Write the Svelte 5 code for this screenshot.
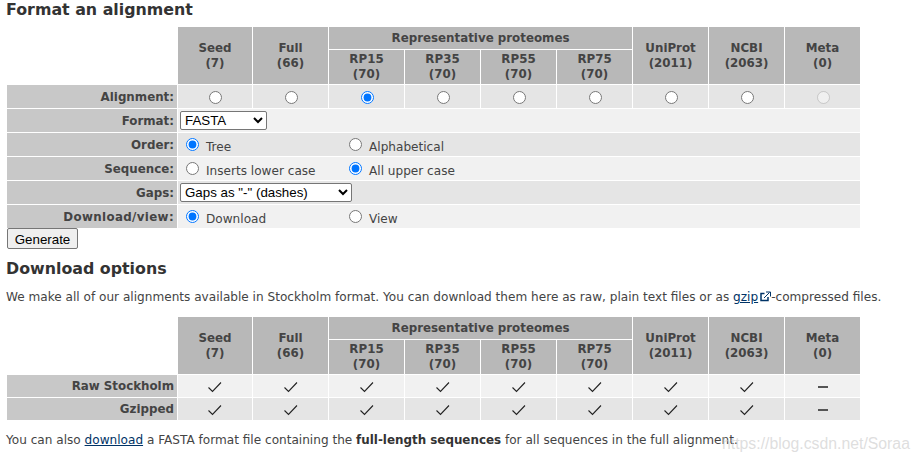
<script>
	const heads = [
		['Seed', 7],
		['Full', 66],
	]
	const rps = ['RP15', 'RP35', 'RP55', 'RP75']
	const tails = [
		['UniProt', 2011],
		['NCBI', 2063],
		['Meta', 0],
	]
	const cols = ['seed', 'full', 'rp15', 'rp35', 'rp55', 'rp75', 'uniprot', 'ncbi', 'meta']

	let alignment = $state('rp15')
	let order = $state('tree')
	let seq = $state('upper')
	let mode = $state('download')
</script>

{#snippet head()}
	<tr>
		<td class="blank" rowspan="2"></td>
		{#each heads as [name, n]}
			<th rowspan="2">{name}<br />({n})</th>
		{/each}
		<th class="group" colspan="4">Representative proteomes</th>
		{#each tails as [name, n]}
			<th rowspan="2">{name}<br />({n})</th>
		{/each}
	</tr>
	<tr>
		{#each rps as rp}
			<th>{rp}<br />(70)</th>
		{/each}
	</tr>
{/snippet}

{#snippet tick()}
	<svg class="tick" width="16" height="12" viewBox="0 0 16 12">
		<path d="M1.5 6.5 L5.5 10.5 L14 1.5" fill="none" stroke="#222" stroke-width="1.1" />
	</svg>
{/snippet}

{#snippet choice(value, text, group, set)}
	<label>
		<input type="radio" {value} checked={group === value} onchange={() => set(value)} />
		<span>{text}</span>
	</label>
{/snippet}

<main>
	<h2 class="first">Format an alignment</h2>
	<table class="form">
		<colgroup>
			<col class="label-col" />
			{#each cols as c}
				<col class="c-{c}" />
			{/each}
		</colgroup>
		<thead>{@render head()}</thead>
		<tbody>
			<tr class="even">
				<th class="label">Alignment:</th>
				{#each cols as c}
					<td class="mid">
						<input type="radio" name="alignment" value={c} bind:group={alignment} disabled={c === 'meta'} />
					</td>
				{/each}
			</tr>
			<tr class="odd">
				<th class="label">Format:</th>
				<td class="ctl" colspan="9">
					<select class="format">
						<option>FASTA</option>
						<option>Stockholm</option>
						<option>SELEX</option>
					</select>
				</td>
			</tr>
			<tr class="even">
				<th class="label">Order:</th>
				<td colspan="9">
					<div class="opts">
						{@render choice('tree', 'Tree', order, (v) => (order = v))}
						{@render choice('alpha', 'Alphabetical', order, (v) => (order = v))}
					</div>
				</td>
			</tr>
			<tr class="odd">
				<th class="label">Sequence:</th>
				<td colspan="9">
					<div class="opts">
						{@render choice('lower', 'Inserts lower case', seq, (v) => (seq = v))}
						{@render choice('upper', 'All upper case', seq, (v) => (seq = v))}
					</div>
				</td>
			</tr>
			<tr class="even">
				<th class="label">Gaps:</th>
				<td class="ctl" colspan="9">
					<select class="gaps">
						<option>Gaps as "-" (dashes)</option>
						<option>Gaps as "." (dots)</option>
						<option>No gaps (unaligned)</option>
					</select>
				</td>
			</tr>
			<tr class="odd">
				<th class="label wide">Download/view:</th>
				<td colspan="9">
					<div class="opts">
						{@render choice('download', 'Download', mode, (v) => (mode = v))}
						{@render choice('view', 'View', mode, (v) => (mode = v))}
					</div>
				</td>
			</tr>
		</tbody>
	</table>
	<button class="generate">Generate</button>

	<h2>Download options</h2>
	<p class="intro">
		We make all of our alignments available in Stockholm format. You can download them here as raw, plain text files or as
		<a href="#gzip">gzip</a><svg class="ext" width="11" height="11" viewBox="0 0 11 11">
			<path d="M4.5 2.5h-3.5v7h7v-3.5" fill="none" stroke="#036" stroke-width="1.5" />
			<path d="M4 7 L9.5 1.5 M6 1h4.5v4.5" fill="none" stroke="#036" stroke-width="1" />
		</svg>-compressed files.
	</p>

	<table class="form dl">
		<colgroup>
			<col class="label-col" />
			{#each cols as c}
				<col class="c-{c}" />
			{/each}
		</colgroup>
		<thead>{@render head()}</thead>
		<tbody>
			<tr class="odd">
				<th class="label">Raw Stockholm</th>
				{#each cols as c}
					<td class="mid">
						{#if c === 'meta'}<span class="dash"></span>{:else}{@render tick()}{/if}
					</td>
				{/each}
			</tr>
			<tr class="even">
				<th class="label">Gzipped</th>
				{#each cols as c}
					<td class="mid">
						{#if c === 'meta'}<span class="dash"></span>{:else}{@render tick()}{/if}
					</td>
				{/each}
			</tr>
		</tbody>
	</table>

	<p class="outro">
		You can also <a href="#download">download</a> a FASTA format file containing the
		<strong>full-length sequences</strong> for all sequences in the full alignment.
	</p>

	<div class="watermark">https://blog.csdn.net/Soraa</div>
</main>

<style>
	:global(body) {
		background: #fff;
	}

	main {
		position: relative;
		height: 462px;
		overflow: hidden;
		padding-left: 6px;
		box-sizing: border-box;
		font-family: 'DejaVu Sans', Verdana, sans-serif;
		font-size: 12.1px;
		color: #444;
	}

	h2 {
		margin: 0;
		font-size: 15.85px;
		line-height: 20px;
		font-weight: bold;
		color: #333;
		padding-top: 10px;
		padding-bottom: 11px;
	}

	h2.first {
		padding-top: 1px;
		padding-bottom: 7px;
		margin-top: -1px;
	}

	.form {
		border-collapse: separate;
		border-spacing: 1px;
		table-layout: fixed;
		width: 855px;
		margin-top: -1px;
		margin-bottom: -1px;
	}

	.dl {
		margin-bottom: 0;
	}

	.label-col {
		width: 170px;
	}
	.c-seed {
		width: 74px;
	}
	.c-full,
	.c-rp15,
	.c-rp35,
	.c-rp55,
	.c-rp75,
	.c-uniprot,
	.c-ncbi,
	.c-meta {
		width: 75px;
	}

	th,
	td {
		padding: 0;
	}

	thead th {
		background: #b8b8b8;
		font-weight: bold;
		font-size: 11.85px;
		line-height: 15px;
		text-align: center;
		color: #444;
	}

	thead .group {
		height: 22px;
	}

	thead tr:nth-child(2) th {
		height: 34px;
	}

	.blank {
		background: #fff;
	}

	tbody tr {
		height: 23px;
	}

	.dl tbody tr {
		height: 22px;
	}

	th.label {
		background: #c8c8c8;
		text-align: right;
		font-size: 11.85px;
		font-weight: bold;
		padding-right: 3px;
	}

	th.wide {
		letter-spacing: 0.35px;
	}

	.even td {
		background: #e5e5e5;
	}
	.odd td {
		background: #f1f1f1;
	}

	.mid {
		text-align: center;
		vertical-align: middle;
	}

	.mid input {
		margin: 0 0 0 1px;
		display: inline-block;
		vertical-align: middle;
		width: 13px;
		height: 13px;
	}

	.ctl {
		padding-left: 2px;
	}

	select {
		display: block;
		height: 19px;
		font-family: 'Liberation Sans', Arial, sans-serif;
		font-size: 13.33px;
		background: #fff;
		color: #000;
		border: 1px solid #767676;
		border-radius: 2px;
		padding: 0;
	}

	.format {
		width: 87px;
	}

	.gaps {
		width: 172px;
	}

	.opts {
		display: grid;
		grid-template-columns: 163px 1fr;
		align-items: center;
		padding-left: 8px;
		height: 23px;
	}

	.opts label {
		display: flex;
		align-items: center;
		gap: 7px;
		line-height: 15px;
	}

	.opts span {
		margin-top: 6px;
	}

	.opts input {
		margin: 0;
		width: 13px;
		height: 13px;
	}

	.generate {
		display: block;
		width: 71px;
		height: 21px;
		padding: 1px 0 0;
		margin: 0 0 0 1px;
		font-family: 'Liberation Sans', Arial, sans-serif;
		font-size: 13.33px;
		color: #000;
		background: #efefef;
		border: 1px solid #767676;
		border-radius: 2px;
	}

	.intro,
	.outro {
		margin: 0;
		line-height: 15px;
		color: #444;
		white-space: nowrap;
	}

	.intro {
		padding-bottom: 12px;
	}

	.outro {
		padding-top: 12px;
	}

	a {
		color: #036;
		text-decoration: underline;
	}

	strong {
		font-size: 11.9px;
		color: #333;
	}

	.ext {
		vertical-align: -1px;
		margin-left: 2px;
	}

	.tick {
		display: inline-block;
		vertical-align: middle;
	}

	.dash {
		display: inline-block;
		width: 10px;
		height: 2px;
		background: #555;
		vertical-align: middle;
	}

	.watermark {
		position: absolute;
		left: 722px;
		top: 434px;
		font-family: 'Liberation Sans', Arial, sans-serif;
		font-size: 15.8px;
		line-height: 20px;
		color: rgba(200, 200, 200, 0.6);
		pointer-events: none;
	}
</style>
